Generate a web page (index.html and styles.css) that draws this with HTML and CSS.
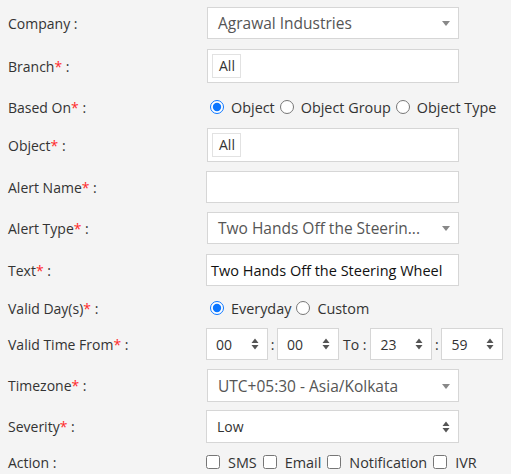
FILE: index.html
```html
<!DOCTYPE html>
<html>
<head>
<meta charset="utf-8">
<link rel="stylesheet" href="styles.css">
</head>
<body>
<div class="form">
  <div class="row h32 mb10">
    <div class="lbl">Company :</div>
    <div class="field"><div class="box sel">Agrawal Industries<span class="caret"></span></div></div>
  </div>
  <div class="row h34 mb10">
    <div class="lbl">Branch<span class="req">*</span> :</div>
    <div class="field"><div class="box multi"><span class="chip">All</span></div></div>
  </div>
  <div class="row h28 mb7">
    <div class="lbl">Based On<span class="req">*</span> :</div>
    <div class="field opts">
      <label class="opt"><input type="radio" name="b" checked>Object</label>
      <label class="opt"><input type="radio" name="b">Object Group</label>
      <label class="opt"><input type="radio" name="b">Object Type</label>
    </div>
  </div>
  <div class="row h34 mb9">
    <div class="lbl">Object<span class="req">*</span> :</div>
    <div class="field"><div class="box multi"><span class="chip">All</span></div></div>
  </div>
  <div class="row h32 mb9">
    <div class="lbl">Alert Name<span class="req">*</span> :</div>
    <div class="field"><div class="box inp wide"></div></div>
  </div>
  <div class="row h32 mb10">
    <div class="lbl">Alert Type<span class="req">*</span> :</div>
    <div class="field"><div class="box sel">Two Hands Off the Steerin...<span class="caret"></span></div></div>
  </div>
  <div class="row h32 mb8">
    <div class="lbl">Text<span class="req">*</span> :</div>
    <div class="field"><div class="box inp wide val">Two Hands Off the Steering Wheel</div></div>
  </div>
  <div class="row h28 mb6">
    <div class="lbl">Valid Day(s)<span class="req">*</span> :</div>
    <div class="field opts">
      <label class="opt"><input type="radio" name="d" checked>Everyday</label>
      <label class="opt"><input type="radio" name="d">Custom</label>
    </div>
  </div>
  <div class="row h32 mb9">
    <div class="lbl">Valid Time From<span class="req">*</span> :</div>
    <div class="field time">
      <div class="box tsel">00<svg class="spin" viewBox="0 0 8 12"><path d="M4 0.5L7.5 5H0.5Z M4 11.5L7.5 7H0.5Z"/></svg></div>
      <span class="colon">:</span>
      <div class="box tsel">00<svg class="spin" viewBox="0 0 8 12"><path d="M4 0.5L7.5 5H0.5Z M4 11.5L7.5 7H0.5Z"/></svg></div>
      <span class="to">To :</span>
      <div class="box tsel">23<svg class="spin" viewBox="0 0 8 12"><path d="M4 0.5L7.5 5H0.5Z M4 11.5L7.5 7H0.5Z"/></svg></div>
      <span class="colon">:</span>
      <div class="box tsel">59<svg class="spin" viewBox="0 0 8 12"><path d="M4 0.5L7.5 5H0.5Z M4 11.5L7.5 7H0.5Z"/></svg></div>
    </div>
  </div>
  <div class="row h33 mb8">
    <div class="lbl">Timezone<span class="req">*</span> :</div>
    <div class="field"><div class="box sel">UTC+05:30 - Asia/Kolkata<span class="caret"></span></div></div>
  </div>
  <div class="row h33 mb7">
    <div class="lbl">Severity<span class="req">*</span> :</div>
    <div class="field"><div class="box sev wide">Low<svg class="spin" viewBox="0 0 8 12"><path d="M4 0.5L7.5 5H0.5Z M4 11.5L7.5 7H0.5Z"/></svg></div></div>
  </div>
  <div class="row h24">
    <div class="lbl">Action :</div>
    <div class="field opts checks">
      <label class="opt"><input type="checkbox">SMS</label>
      <label class="opt"><input type="checkbox">Email</label>
      <label class="opt"><input type="checkbox">Notification</label>
      <label class="opt"><input type="checkbox">IVR</label>
    </div>
  </div>
</div>
</body>
</html>
```
FILE: styles.css
```css
* { box-sizing: border-box; }
html, body { margin: 0; padding: 0; }
body {
  background: #f4f4f4;
  font-family: "Open Sans", "Noto Sans", sans-serif;
  font-size: 14px;
  color: #333;
  width: 511px;
  height: 474px;
  overflow: hidden;
}
.form { padding: 7px 0 0 8px; }
.row { display: flex; align-items: center; }
.h24 { height: 24px; }
.h28 { height: 28px; }
.h32 { height: 32px; }
.h33 { height: 33px; }
.h34 { height: 34px; }
.mb6 { margin-bottom: 6px; }
.mb7 { margin-bottom: 7px; }
.mb8 { margin-bottom: 8px; }
.mb9 { margin-bottom: 9px; }
.mb10 { margin-bottom: 10px; }
.lbl { width: 198px; flex: none; color: #333; }
.req { color: #ff2a2a; }
.field { flex: none; height: 100%; display: flex; align-items: center; }
.box {
  background: #fff;
  border: 1px solid #d6d6d6;
  height: 100%;
  display: flex;
  align-items: center;
  position: relative;
}
.sel { width: 252px; margin-left: 1px; padding-left: 10px; color: #555; font-size: 15.5px; }
.caret {
  position: absolute;
  right: 8px;
  top: 50%;
  margin-top: -2px;
  width: 0; height: 0;
  border-left: 4px solid transparent;
  border-right: 4px solid transparent;
  border-top: 5px solid #888;
}
.multi { width: 252px; margin-left: 1px; padding-left: 4px; }
.chip {
  border: 1px solid #e2e2e2;
  background: #fff;
  height: 24px;
  padding: 0 5px 0 6px;
  line-height: 22px;
  color: #333;
}
.wide { width: 253px; }
.inp { padding-left: 4px; }
.val { color: #111; font-size: 14.5px; }
.opts { padding-left: 4px; color: #333; font-size: 14.4px; }
.opt { display: flex; align-items: center; margin-right: 5px; }
.opt input[type=radio] {
  margin: 0 7px 0 0;
  width: 14px; height: 14px;
  accent-color: #0a75ff;
}
.checks { padding-left: 0; }
.checks .opt { margin-right: 6px; }
.opt input[type=checkbox] {
  margin: 0 8px 0 0;
  width: 14px; height: 14px;
}
.time { color: #333; }
.tsel { width: 62px; padding-left: 9px; color: #333; }
.spin { position: absolute; right: 8px; top: 50%; margin-top: -6px; width: 8px; height: 12px; fill: #555; }
.colon { width: 9px; text-align: center; }
.to { margin: 0 4px 0 4px; }
.sev { padding-left: 10px; color: #333; }
```
